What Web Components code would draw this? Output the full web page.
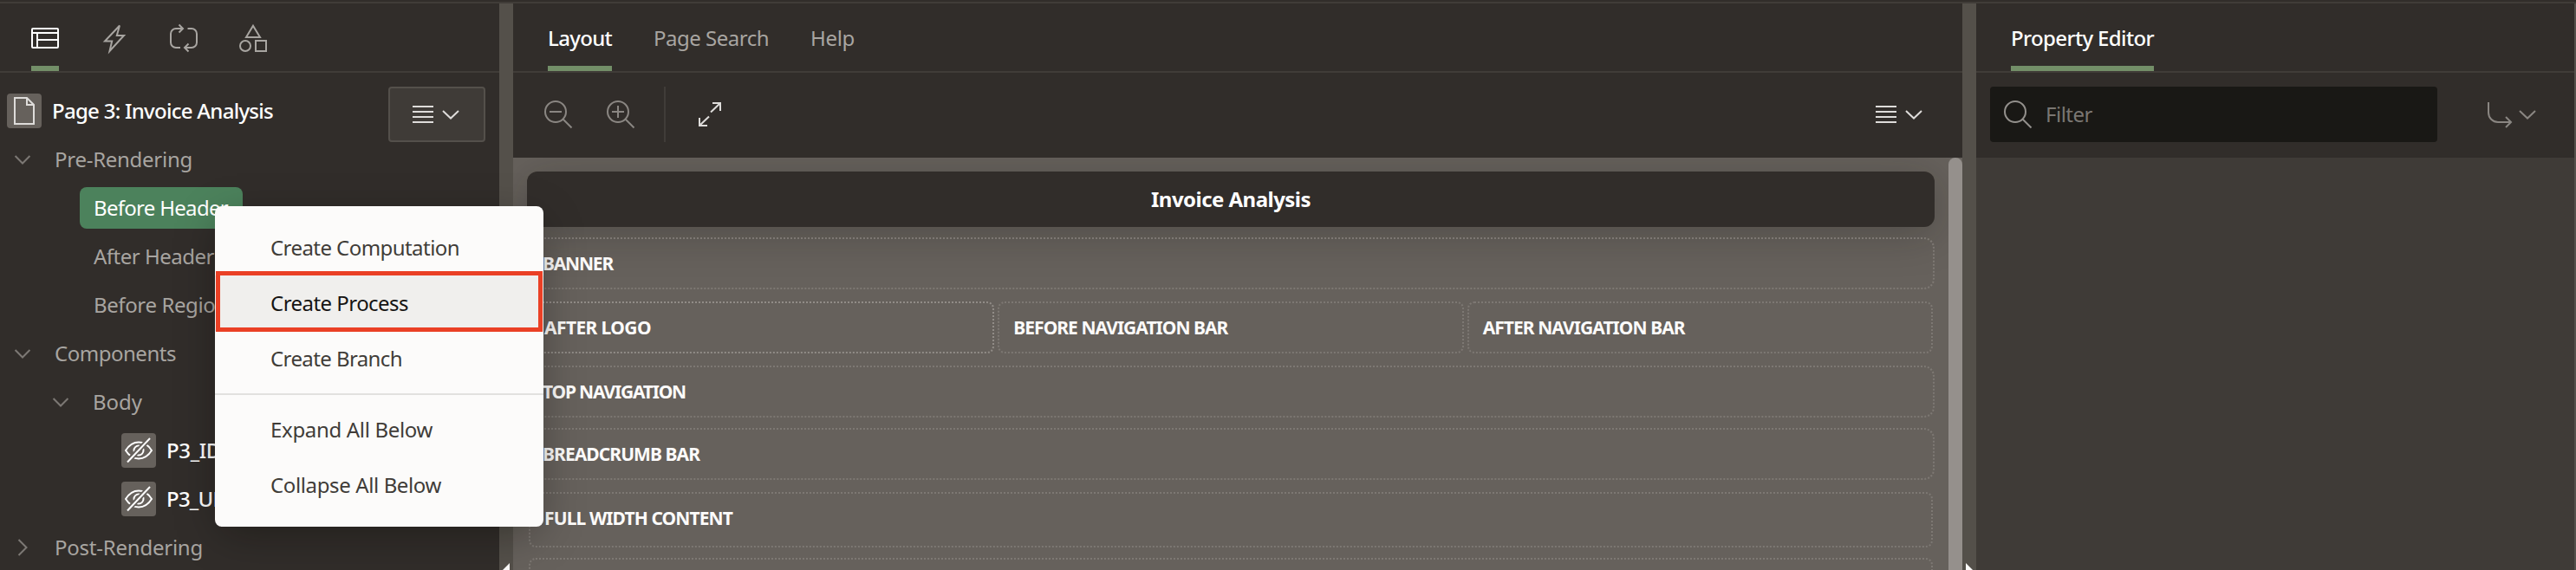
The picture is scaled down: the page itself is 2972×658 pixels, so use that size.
<!DOCTYPE html>
<html lang="en">
<head>
<meta charset="utf-8">
<title>Page Designer</title>
<style>
html,body{margin:0;height:100%;overflow:hidden;background:#312d2a}
body{font:24px/32px "Noto Sans","Open Sans",sans-serif;color:#a8a5a1}
</style>
</head>
<body>
<page-designer></page-designer>
<script>
const define = (name, html, setup) => customElements.define(name, class extends HTMLElement {
  connectedCallback() {
    if (this.shadowRoot) return;
    const t = document.createElement('template');
    t.innerHTML = html;
    this.attachShadow({mode: 'open'}).append(t.content.cloneNode(true));
    if (setup) setup(this, this.shadowRoot);
  }
});

/* Text run tracked to a given width */
define('fit-text', `<style>:host{display:inline-block;white-space:pre;flex:none}span{display:inline-block}</style><span><slot></slot></span>`,
  (el, root) => {
    const w = +el.getAttribute('w'), s = root.querySelector('span');
    if (!w) return;
    const n = el.textContent.length;
    s.style.letterSpacing = ((w - s.getBoundingClientRect().width) / n) + 'px';
  });

/* Icons, 2px stroke on a 32px grid */
const ICONS = {
  layout: '<rect x="1" y="5" width="30" height="22" rx="1"/><path d="M1 10H31M7 10V27M7 18H31"/>',
  bolt: '<path d="M22 1.500 5 19.500H13.200L10.500 31 27 13H18.800Z"/>',
  loop: '<path d="M15 5H7A6 6 0 0 0 1 11V21A6 6 0 0 0 7 27H12M20.500 5H25A6 6 0 0 1 31 11V21A6 6 0 0 1 25 27H17M10.500 .500 15 5 10.500 9.500M21.500 22.500 17 27 21.500 31.500"/>',
  shapes: '<path d="M16 1.700 24 15H8Z"/><circle cx="7" cy="25" r="6"/><rect x="19" y="19" width="12" height="12"/>',
  page: '<path stroke="#dedcda" d="M5 1H19L27 9V31H5ZM19 1V9H27"/>',
  down: '<path d="M7 12 16 20.500 25 12"/>',
  lines: '<path d="M4 7H28M4 13H28M4 19H28M4 25H28"/>',
  search: '<circle cx="13" cy="13" r="12"/><path d="M21.500 21.500 31.500 31.500"/>',
  zoomout: '<circle cx="13" cy="13" r="12"/><path d="M21.500 21.500 31.500 31.500M6 13H20"/>',
  zoomin: '<circle cx="13" cy="13" r="12"/><path d="M21.500 21.500 31.500 31.500M6 13H20M13 6V20"/>',
  expand: '<path d="M16 13.500 27 3M18 3H27V12M14 18.500 3 29M3 20V29H12"/>',
  goto: '<path d="M3 2V14A11 11 0 0 0 14 25H29M23 19 29 25 23 31"/>',
  hidden: '<path d="M1 16Q7 6.500 16 6.500T31 16Q25 25.500 16 25.500T1 16Z"/><circle cx="16" cy="16" r="5.500"/><path d="M14 18 18 14"/><path d="M4 28 28 3" stroke="#66615c" stroke-width="6"/><path d="M3 29.500 29 2"/>'
};
define('ui-icon', `<style>:host{display:block;flex:none;width:32px;height:32px}svg{display:block;width:100%;height:100%;overflow:visible;fill:none;stroke:currentColor;stroke-width:2}</style><svg viewBox="0 0 32 32"></svg>`,
  (el, root) => { root.querySelector('svg').innerHTML = ICONS[el.getAttribute('name')] || ''; });

define('tab-item', `<style>
:host{display:flex;align-items:center;height:78px;box-sizing:border-box;padding-top:2px;color:#a8a5a1}
:host([active]){color:#fff;font-weight:500;box-shadow:inset 0 -6px #738f68}
</style><slot></slot>`);

define('tab-bar', `<style>
:host{display:flex;height:80px;box-sizing:border-box;border-bottom:2px solid #403c38;gap:48px;padding-left:40px;flex:none}
</style><slot></slot>`);

define('tree-row', `<style>
:host{display:flex;align-items:center;height:56px;color:#a8a5a1;flex:none}
:host([bright]){color:#fff;font-weight:500}
.exp{color:#7c7874;width:18px;height:18px;margin-right:28px}
.exp.none{display:none}
.box{display:flex;align-items:center;justify-content:center;width:40px;height:40px;border-radius:4px;background:#66615c;margin-right:12px}
.box.none{display:none}
:host([selected]) .label{background:#4c825c;color:#fff;border-radius:8px;margin-left:-16px;padding:8px 17px 8px 16px}
.label{display:block}
</style><ui-icon class="exp"></ui-icon><span class="box"></span><span class="label"><slot></slot></span>`,
  (el, root) => {
    el.style.paddingLeft = el.getAttribute('indent') + 'px';
    const exp = root.querySelector('.exp'), box = root.querySelector('.box');
    const e = el.getAttribute('expander'), i = el.getAttribute('icon');
    if (e) exp.shadowRoot.querySelector('svg').innerHTML = e === 'down' ? '<path stroke-width="3.600" d="M1 9 16 24 31 9"/>' : '<path stroke-width="3.600" d="M8 0 24 16 8 32"/>';
    else exp.classList.add('none');
    if (i) box.innerHTML = `<ui-icon name="${i}"></ui-icon>`; else box.classList.add('none');
  });

define('menu-button', `<style>
:host{display:flex;align-items:center;box-sizing:border-box;width:112px;height:64px;color:#dedcda;padding-left:24px}
:host([boxed]){background:#3f3b37;border:2px solid #54504b;border-radius:4px;padding-left:22px}
:host([muted]){color:#8a8682}
</style><ui-icon class="i"></ui-icon><ui-icon name="down"></ui-icon>`,
  (el, root) => { root.querySelector('.i').shadowRoot.querySelector('svg').innerHTML = ICONS[el.getAttribute('icon')]; });

define('rendering-pane', `<style>
:host{display:flex;flex-direction:column;width:576px;flex:none;background:#312d2a}
tab-bar{padding-left:36px}
tab-item{width:32px}
.body{display:flex;flex-direction:column;padding-top:16px;position:relative}
menu-button{position:absolute;left:448px;top:16px}
</style>
<tab-bar>
<tab-item active><ui-icon name="layout"></ui-icon></tab-item>
<tab-item><ui-icon name="bolt"></ui-icon></tab-item>
<tab-item><ui-icon name="loop"></ui-icon></tab-item>
<tab-item><ui-icon name="shapes"></ui-icon></tab-item>
</tab-bar>
<div class="body">
<tree-row indent="8" icon="page" bright><fit-text w="255">Page 3: Invoice Analysis</fit-text></tree-row>
<tree-row indent="17" expander="down"><fit-text w="159">Pre-Rendering</fit-text></tree-row>
<tree-row indent="108" selected><fit-text w="155">Before Header</fit-text></tree-row>
<tree-row indent="108"><fit-text w="139">After Header</fit-text></tree-row>
<tree-row indent="108"><fit-text w="166">Before Regions</fit-text></tree-row>
<tree-row indent="17" expander="down"><fit-text w="140">Components</fit-text></tree-row>
<tree-row indent="61" expander="down"><fit-text w="57">Body</fit-text></tree-row>
<tree-row indent="140" icon="hidden" bright><fit-text w="63">P3_ID</fit-text></tree-row>
<tree-row indent="140" icon="hidden" bright><fit-text w="80">P3_URL</fit-text></tree-row>
<tree-row indent="17" expander="right"><fit-text w="171">Post-Rendering</fit-text></tree-row>
<menu-button icon="lines" boxed></menu-button>
</div>`);

define('pane-splitter', `<style>
:host{display:flex;flex-direction:column;justify-content:flex-end;width:16px;flex:none;background:#54504a}
i{display:block;width:8px;height:8px;margin-left:4px;background:#fcfbfa;clip-path:polygon(0 0,100% 100%,0 100%)}
:host([left]) i{clip-path:polygon(100% 0,100% 100%,0 100%)}
</style><i></i>`);

define('layout-region', `<style>
:host{display:flex;align-items:center;box-sizing:border-box;height:60px;border:2px dotted #7d7873;border-radius:12px;padding-left:16px;color:#fcfbfa;font-weight:700;font-size:21px;flex:none}
:host([inner]){border-radius:8px;margin:0 2px}
:host([cell]){border-radius:8px;flex:1}
:host([hot]){border-color:#918c87}
:host([tall]){height:64px;padding-bottom:4px}
</style><slot></slot>`);

define('layout-pane', `<style>
:host{display:flex;flex-direction:column;width:1672px;flex:none;background:#312d2a}
.tools{display:flex;align-items:center;height:98px;box-sizing:border-box;padding:0 16px 2px 36px;color:#8a8682}
.tools>ui-icon+ui-icon{margin-left:40px}
.tools .sep{width:2px;height:64px;background:#403c38;margin:0 36px 0 34px}
.tools .full{color:#dedcda}
menu-button{margin-left:auto}
.canvas{flex:1;min-height:0;display:flex;background:#66615c;overflow:hidden}
.regions{display:flex;flex-direction:column;width:1624px;padding:16px 16px 0 16px}
.title{display:flex;align-items:center;justify-content:center;height:64px;flex:none;background:#312d2a;border-radius:12px;color:#fff;font-weight:700;box-shadow:0 8px 48px rgba(20,18,16,.26);margin-bottom:12px}
.row{display:flex;gap:4px;margin:14px 2px;flex:none}
.thumb{width:16px;background:#95908c;border-radius:8px 8px 0 0}
</style>
<tab-bar>
<tab-item active><fit-text w="74">Layout</fit-text></tab-item>
<tab-item><fit-text w="133">Page Search</fit-text></tab-item>
<tab-item><fit-text w="51">Help</fit-text></tab-item>
</tab-bar>
<div class="tools"><ui-icon name="zoomout"></ui-icon><ui-icon name="zoomin"></ui-icon><span class="sep"></span><ui-icon class="full" name="expand"></ui-icon><menu-button icon="lines"></menu-button></div>
<div class="canvas"><div class="regions">
<div class="title"><fit-text w="184">Invoice Analysis</fit-text></div>
<layout-region><fit-text w="81">BANNER</fit-text></layout-region>
<div class="row">
<layout-region cell hot><fit-text w="123">AFTER LOGO</fit-text></layout-region>
<layout-region cell><fit-text w="247">BEFORE NAVIGATION BAR</fit-text></layout-region>
<layout-region cell><fit-text w="233">AFTER NAVIGATION BAR</fit-text></layout-region>
</div>
<layout-region><fit-text w="165">TOP NAVIGATION</fit-text></layout-region>
<layout-region style="margin-top:12px;margin-bottom:14px"><fit-text w="181">BREADCRUMB BAR</fit-text></layout-region>
<layout-region inner tall><fit-text w="217">FULL WIDTH CONTENT</fit-text></layout-region>
<layout-region inner tall style="margin-top:12px"></layout-region>
</div><div class="thumb"></div></div>`);

define('property-pane', `<style>
:host{display:flex;flex-direction:column;flex:1;min-width:0;box-sizing:border-box;background:#3f3b37;border-right:2px solid #54504b}
.top{background:#312d2a;flex:none}
.tools{display:flex;align-items:center;height:98px;box-sizing:border-box;padding:0 14px 2px 16px}
.field{display:flex;align-items:center;box-sizing:border-box;width:516px;height:64px;border-radius:4px;background:#191815;padding-left:16px;color:#7a7672}
.field ui-icon{color:#93908c;margin-right:16px}
menu-button{margin-left:auto}
</style>
<div class="top"><tab-bar><tab-item active><fit-text w="165">Property Editor</fit-text></tab-item></tab-bar>
<div class="tools"><div class="field"><ui-icon name="search"></ui-icon><fit-text w="54">Filter</fit-text></div><menu-button icon="goto" muted></menu-button></div></div>`);

define('menu-item', `<style>
:host{display:flex;align-items:center;height:64px;padding-left:64px;color:#403c38;position:relative}
:host([active]){background:#f0efed;color:#161513}
:host([active])::after{content:"";position:absolute;left:1px;right:1px;top:-5px;bottom:-1px;border:5px solid #ea4025}
</style><slot></slot>`);

define('context-menu', `<style>
:host{display:block;position:absolute;left:248px;top:238px;width:379px;height:370px;box-sizing:border-box;padding:16px 0;background:#fcfbfa;border-radius:8px;box-shadow:0 12px 48px -8px rgba(10,8,6,.4)}
hr{border:0;height:2px;background:#e2e1df;margin:8px 0}
</style>
<menu-item><fit-text w="218">Create Computation</fit-text></menu-item>
<menu-item active><fit-text w="159">Create Process</fit-text></menu-item>
<menu-item><fit-text w="152">Create Branch</fit-text></menu-item>
<hr>
<menu-item><fit-text w="187">Expand All Below</fit-text></menu-item>
<menu-item><fit-text w="197">Collapse All Below</fit-text></menu-item>`);

define('page-designer', `<style>
:host{display:flex;flex-direction:column;width:2972px;height:658px;position:relative;overflow:hidden;box-sizing:border-box;padding-top:2px}
.rule{height:2px;background:#403c38;flex:none}
.panes{display:flex;flex:1;min-height:0}
.panes>*{overflow:hidden}
</style><div class="rule"></div>
<div class="panes"><rendering-pane></rendering-pane><pane-splitter left></pane-splitter><layout-pane></layout-pane><pane-splitter></pane-splitter><property-pane></property-pane></div>
<context-menu></context-menu>`);
</script>
</body>
</html>
